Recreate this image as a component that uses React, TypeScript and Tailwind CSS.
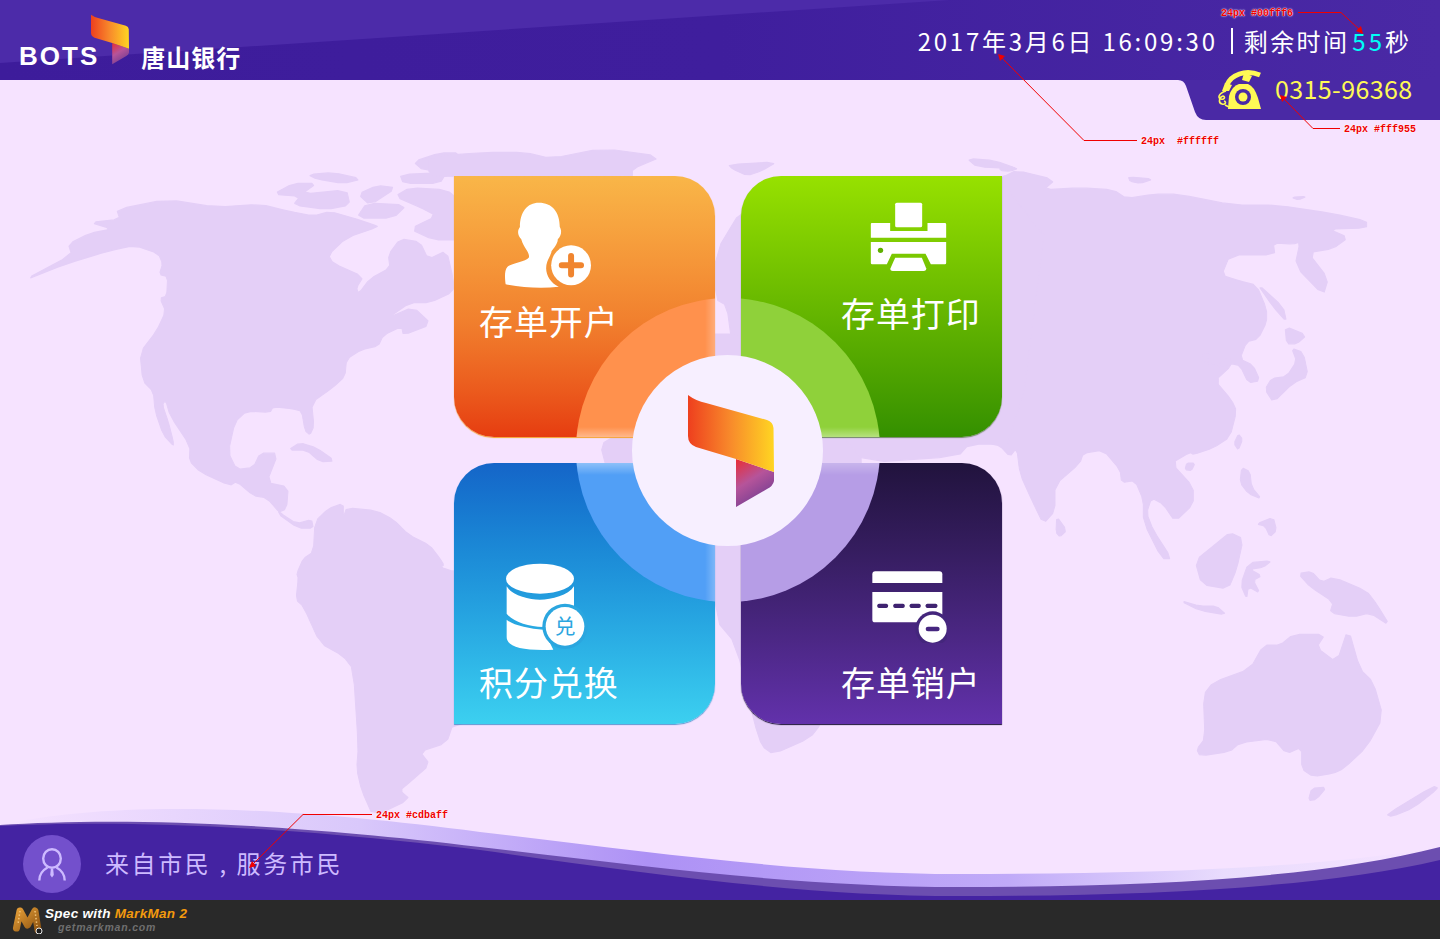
import React from 'react';

// map shapes are kept in the coordinates they were measured in, each group has its own transform
const AMERICAS = [
  'M65,326 L200,285 L330,255 L405,243 L475,262 L488,285 L478,310 L503,315 L500,360 L480,365 L497,395 L470,440 L420,490 L428,555 L460,580 L465,625 L490,680 L520,705 L520,695 L505,650 L487,610 L497,600 L510,635 L570,705 L568,740 L600,765 L690,797 L710,787 L760,820 L800,825 L840,860 L890,885 L935,875 L940,895 L895,895 L830,860 L860,850 L865,800 L800,790 L835,722 L780,722 L760,755 L710,760 L685,720 L705,650 L740,625 L810,628 L820,615 L880,620 L905,625 L915,670 L930,680 L942,660 L935,605 L1000,570 L1035,545 L1040,505 L1085,483 L1135,475 L1150,450 L1205,430 L1210,450 L1295,425 L1240,385 L1165,410 L1230,375 L1290,375 L1360,350 L1360,320 L1340,255 L1285,275 L1260,235 L1200,228 L1165,265 L1170,295 L1110,320 L1075,355 L1070,340 L1090,315 L1000,285 L985,265 L1040,225 L1135,200 L1120,195 L1060,180 L990,165 L940,175 L870,165 L780,148 L650,155 L500,137 L350,160 L360,183 L270,190 L335,205 L270,215 L205,240 L215,265 Z',
  'M820,125 L880,100 L950,100 L905,125 L1040,115 L1050,150 L980,160 L880,150 L900,130 Z',
  'M925,80 L1000,75 L1085,90 L1030,100 L950,90 Z',
  'M1075,125 L1130,105 L1190,110 L1110,150 Z',
  'M1185,130 L1230,110 L1340,115 L1380,140 L1380,230 L1300,230 L1230,205 L1310,175 L1260,155 Z',
  'M1100,145 L1220,150 L1180,180 L1070,180 Z',
  'M1200,80 L1340,75 L1320,100 L1210,100 Z',
  'M1240,50 L1320,30 L1380,30 L1380,70 L1270,70 Z',
  'M865,715 L900,698 L950,710 L1005,740 L960,742 L920,715 Z',
  'M945,880 L985,850 L1030,838 L1030,870 L1040,848 L1130,855 L1180,875 L1225,910 L1290,935 L1320,965 L1332,980 L1322,985 L1360,995 L1500,1000 L1500,1345 L1360,1345 L1340,1390 L1260,1410 L1290,1440 L1230,1480 L1200,1500 L1230,1520 L1120,1560 L1085,1500 L1070,1450 L1075,1400 L1060,1220 L1030,1190 L960,1160 L910,1075 L888,1060 L895,1010 L890,1000 L910,965 L940,950 Z',
];

const ASIA = [
  'M10,85 L50,70 L165,92 L130,115 L240,110 L340,115 L380,135 L460,125 L535,125 L700,150 L830,150 L1000,170 L1100,187 L1100,203 L985,205 L1045,225 L1000,250 L925,260 L985,320 L970,358 L885,290 L900,235 L880,240 L820,237 L825,265 L690,265 L665,312 L720,325 L770,335 L800,390 L800,420 L775,458 L740,465 L720,505 L760,520 L780,555 L745,560 L720,520 L690,515 L650,525 L595,505 L630,485 L620,515 L650,520 L690,500 L695,520 L645,555 L695,600 L710,625 L690,685 L640,710 L580,725 L570,720 L515,745 L580,800 L580,840 L525,880 L490,840 L455,825 L440,860 L460,900 L515,965 L485,965 L430,880 L430,830 L405,785 L365,790 L360,760 L310,715 L250,722 L240,745 L165,795 L165,855 L130,885 L95,830 L60,770 L50,710 L30,730 L0,705 L-30,700 L-30,85 Z',
  'M0,60 L55,65 L30,72 L0,70 Z',
  'M385,85 L460,90 L420,100 L390,95 Z',
  'M875,132 L920,130 L895,138 Z',
  'M770,330 L850,385 L860,420 L820,385 Z',
  'M855,430 L920,450 L890,470 L860,470 Z',
  'M875,480 L910,490 L925,545 L880,560 L820,605 L795,575 L815,550 L860,545 L890,510 Z',
  'M715,678 L728,690 L715,715 L702,700 Z',
  'M560,745 L585,745 L575,762 L555,760 Z',
  'M170,868 L200,900 L180,915 L168,905 Z',
  'M725,755 L750,765 L755,800 L785,828 L745,815 L720,790 Z',
  'M770,885 L820,870 L830,900 L810,915 L795,890 Z',
  'M690,905 L730,920 L710,990 L685,1035 L605,1025 L585,970 L650,930 Z',
  'M745,975 L815,970 L790,985 L750,990 L785,1005 L760,1015 L780,1045 L745,1030 L740,1058 L722,1025 Z',
  'M540,1062 L600,1075 L650,1075 L680,1095 L600,1085 Z',
  'M895,1000 L935,995 L965,1020 L1000,1008 L1100,1040 L1130,1070 L1170,1120 L1110,1090 L1060,1100 L990,1090 L1000,1065 L930,1030 Z',
  'M610,1280 L640,1250 L750,1220 L790,1165 L840,1165 L880,1140 L975,1140 L950,1170 L1010,1205 L1045,1125 L1080,1220 L1120,1250 L1150,1330 L1100,1400 L1030,1450 L1000,1460 L940,1468 L905,1450 L905,1400 L860,1415 L820,1380 L720,1390 L690,1410 L600,1420 L590,1405 L615,1380 Z',
  'M935,1495 L980,1492 L950,1520 L925,1523 Z',
  'M1160,1555 L1300,1490 L1315,1495 L1240,1540 L1175,1560 Z',
];

const CENTER = [
  'M-30,65 L120,55 L230,55 L300,70 L440,45 L600,65 L520,95 L520,115 L30,115 L-30,110 Z',
  'M780,85 L910,78 L870,100 L830,112 L790,95 Z',
  'M1425,70 L1500,75 L1560,95 L1450,90 Z',
  'M815,195 L745,300 L745,415 L775,430 L790,530 L1090,755 L1150,815 L1400,800 L1430,770 L1560,770 L1650,130 L1000,130 Z',
  'M435,790 L445,760 L520,745 L700,500 L820,500 L1090,755 L1150,815 L1100,1200 L1030,1455 L1000,1490 L900,1530 L870,1510 L850,1455 L800,1260 L745,1200 L745,1020 L520,1020 Z',
];

// one pass of corner cutting so the coast lines don't look like straight polygons
function smooth(d: string) {
  const nums = d.match(/-?\d+(\.\d+)?/g)!.map(Number);
  const pts: [number, number][] = [];
  for (let i = 0; i < nums.length; i += 2) pts.push([nums[i], nums[i + 1]]);
  const out: string[] = [];
  pts.forEach((p, i) => {
    const q = pts[(i + 1) % pts.length];
    out.push(`${p[0] * 0.8 + q[0] * 0.2},${p[1] * 0.8 + q[1] * 0.2}`);
    out.push(`${p[0] * 0.2 + q[0] * 0.8},${p[1] * 0.2 + q[1] * 0.8}`);
  });
  return `M${out.join(' L')} Z`;
}

function WorldMap() {
  return (
    <svg className="absolute inset-0" width="1440" height="939" viewBox="0 0 1440 939">
      <g fill="#e4cff7" stroke="#e4cff7" strokeWidth="3" strokeLinejoin="round">
        <g transform="translate(0 140) scale(0.3333 0.4337)">
          {AMERICAS.map((d, i) => <path key={i} d={smooth(d)} />)}
        </g>
        <g transform="translate(1000 140) scale(0.3333 0.4337)">
          {ASIA.map((d, i) => <path key={i} d={smooth(d)} />)}
        </g>
        <g transform="translate(440 130) scale(0.37 0.408)">
          {CENTER.map((d, i) => <path key={i} d={smooth(d)} />)}
        </g>
      </g>
    </svg>
  );
}

function Flag({ id, className }: { id: string; className: string }) {
  return (
    <svg className={className} viewBox="0 0 86 112">
      <defs>
        <linearGradient id={`${id}-front`} x1="0" y1="0" x2="1" y2="0">
          <stop offset="0" stopColor="#ee3f1e" />
          <stop offset="0.5" stopColor="#f88b2b" />
          <stop offset="1" stopColor="#ffd522" />
        </linearGradient>
        <linearGradient id={`${id}-back`} x1="0" y1="0" x2="0.5" y2="1">
          <stop offset="0" stopColor="#ea2c34" />
          <stop offset="0.5" stopColor="#b6549a" />
          <stop offset="1" stopColor="#743d92" />
        </linearGradient>
      </defs>
      <path d="M48,64 L86,77 L86,86 Q85,91 79,94 L48,112 Z" fill={`url(#${id}-back)`} />
      <path d="M0,0 Q8,6 18,8 L79,25 Q85,27 85.5,33 L86,77 L48,64 L8,52 Q0,49 0,41 Z" fill={`url(#${id}-front)`} />
    </svg>
  );
}

function PhoneIcon() {
  return (
    <svg className="w-[45px] h-[40px]" viewBox="0 0 45 40">
      <path d="M11,39 L12,26 Q15,16 22,14 L31,14 Q37,16 41,28 L44,39 Z" fill="#fff955" />
      <circle cx="26" cy="27" r="8" fill="#4a29a5" />
      <circle cx="26" cy="27" r="4.5" fill="#fff955" />
      <path d="M10,15 C14,5 28,-1 43,5" fill="none" stroke="#fff955" strokeWidth="5" />
      <path d="M27,3 L35,6 L32,12 L25,10 Z M8,13 L15,15 L12,21 L5,21 Z" fill="#fff955" />
      <path d="M9,21 C2,23 0,28 4,29 C7,30 9,27 6,26 C2,27 1,33 5,34 C8,35 10,32 7,31 M8,35 L12,37" fill="none" stroke="#fff955" strokeWidth="1.6" />
    </svg>
  );
}

function PersonAddIcon() {
  return (
    <svg className="w-[88px] h-[86px]" viewBox="160 95 265 258">
      <path
        d="M265,97 C230,97 208,125 208,170 C200,180 200,195 212,207 C220,235 238,245 235,262 C225,275 180,280 170,290 C160,300 163,330 165,342 C215,353 275,355 325,350 C295,335 280,305 290,275 C295,262 303,250 303,243 C318,225 322,215 322,207 C334,195 334,180 328,170 C328,125 305,97 265,97 Z"
        fill="#fff"
      />
      <circle cx="362" cy="285" r="60" fill="#fff" />
      <path d="M334,285 H392 M362,257 V313" stroke="#f0852f" strokeWidth="18" strokeLinecap="round" />
    </svg>
  );
}

function PrinterIcon() {
  return (
    <svg className="w-[77px] h-[70px]" viewBox="420 95 230 210">
      <rect x="495" y="97" width="81" height="74" rx="5" fill="#fff" />
      <path d="M425,158 H480 V182 H592 V158 H644 Q648,158 648,162 V202 H422 V161 Q422,158 425,158 Z" fill="#fff" />
      <path d="M422,215 H648 V278 Q648,282 644,282 H602 L586,250 H485 L470,282 H426 Q422,282 422,278 Z" fill="#fff" />
      <path d="M495,262 H575 L588,294 Q589,302 580,302 H488 Q479,302 481,294 Z" fill="#fff" />
      <circle cx="451" cy="240" r="8" fill="#5fb000" />
    </svg>
  );
}

function DatabaseIcon() {
  return (
    <svg className="w-[83px] h-[87px]" viewBox="168 338 249 261">
      <ellipse cx="270" cy="385" rx="102" ry="45" fill="#fff" />
      <path d="M170,408 C185,435 235,448 270,448 C305,448 355,435 372,408 V480 H300 L280,530 C235,528 190,515 170,490 Z" fill="#fff" />
      <path d="M170,508 C190,525 240,535 280,538 L310,598 C220,602 170,590 170,560 Z" fill="#fff" />
      <circle cx="345" cy="528" r="68" fill="#2ba6df" />
      <circle cx="345" cy="528" r="58" fill="#fff" />
      <text x="345" y="551" textAnchor="middle" fontSize="62" fill="#2ba6df" fontFamily="'Noto Sans CJK SC', sans-serif">兑</text>
    </svg>
  );
}

function CardIcon() {
  return (
    <svg className="w-[75px] h-[72px]" viewBox="424 362 225 216">
      <path d="M425,372 Q425,363 434,363 H626 Q635,363 635,372 V398 H425 Z" fill="#fff" />
      <path d="M425,425 H635 V516 H433 Q425,516 425,508 Z" fill="#fff" />
      <rect x="440" y="460" width="32" height="13" rx="5" fill="#3f2370" />
      <rect x="488" y="460" width="34" height="13" rx="5" fill="#3f2370" />
      <rect x="537" y="460" width="33" height="13" rx="5" fill="#3f2370" />
      <rect x="585" y="460" width="35" height="13" rx="5" fill="#3f2370" />
      <circle cx="606" cy="535" r="52" fill="#44267c" />
      <circle cx="606" cy="535" r="42" fill="#fff" />
      <rect x="585" y="529" width="42" height="14" rx="7" fill="#46267f" />
    </svg>
  );
}

function PersonOutline() {
  return (
    <svg className="w-[28px] h-[33px]" viewBox="0 0 28 33" fill="none" stroke="#cdbaff" strokeWidth="2.4">
      <ellipse cx="14" cy="10.5" rx="8.8" ry="9.3" />
      <path d="M1.3,32.5 C1.3,26 5,22 9.5,19.5 M26.7,32.5 C26.7,26 23,22 18.5,19.5" />
      <path d="M12.8,21 H15.2 L15.8,27 L14,29.5 L12.2,27 Z" fill="#cdbaff" stroke="none" />
    </svg>
  );
}

function MarkManLogo() {
  return (
    <svg className="w-[32px] h-[28px]" viewBox="0 0 32 28">
      <defs>
        <linearGradient id="mm" x1="0" y1="0" x2="1" y2="1">
          <stop offset="0" stopColor="#e09a35" />
          <stop offset="1" stopColor="#8f5512" />
        </linearGradient>
      </defs>
      <path d="M4.5,22 L8,5 L15.5,19 L23,5 L26,24" fill="none" stroke="url(#mm)" strokeWidth="7" strokeLinecap="round" strokeLinejoin="round" />
      <path d="M8,5 L6,18 M23,5 L25,20" stroke="#f3c377" strokeWidth="1.5" strokeDasharray="1.5 2" />
      <circle cx="27" cy="25" r="3" fill="#1d1d1d" stroke="#e8e8e8" strokeWidth="1" />
    </svg>
  );
}

function Annotation({ text, className }: { text: string; className: string }) {
  return (
    <span className={`absolute whitespace-pre font-['Liberation_Mono',monospace] text-[10px] leading-[12px] font-bold text-[#f00000] [text-shadow:0_0_1px_#fff,0_0_2px_#fff] ${className}`}>
      {text}
    </span>
  );
}

function AnnotationLines() {
  return (
    <svg className="absolute inset-0 pointer-events-none" width="1440" height="939" viewBox="0 0 1440 939" fill="none">
      <g stroke="#f00000" strokeWidth="1">
        <path d="M1298,12.5 H1341 L1361,31" />
        <path d="M1137,140.5 H1084 L1000,56" />
        <path d="M1340,128.5 H1313 L1282,97" />
        <path d="M372,814.5 H303 L252,865" />
      </g>
      <g fill="#f00000">
        <path d="M1363,34 L1356,31 L1361,26 Z" />
        <path d="M998,54 L1005,56 L1000,61 Z" />
        <path d="M1280,95 L1287,97 L1282,102 Z" />
        <path d="M249,868 L252,861 L256,866 Z" />
      </g>
    </svg>
  );
}

function Tile({ className, children }: { className: string; children: React.ReactNode }) {
  return (
    <div className={`relative w-[261px] h-[261px] overflow-hidden flex flex-col items-start ${className}`}>
      {children}
    </div>
  );
}

const tileLabel = 'relative text-[34px] leading-[34px] tracking-[0.9px] text-white';

export default function App() {
  return (
    <div className="relative w-[1440px] h-[939px] overflow-hidden flex flex-col bg-[#f6e3ff] font-['Noto_Sans_CJK_SC',sans-serif]">
      <WorldMap />

      <header className="relative h-20 flex items-start justify-between bg-gradient-to-r from-[#3d1c9b] via-[#3f1e9d] to-[#4a29a5]">
        <svg className="absolute inset-0" width="1440" height="80" viewBox="0 0 1440 80">
          <path d="M0,0 H950 L0,63 Z" fill="#4c2ba9" />
        </svg>
        <div className="relative flex items-end h-[70px] pl-[19px]">
          <span className="font-['Liberation_Sans',sans-serif] font-bold text-[26px] leading-[26px] tracking-[2px] text-white mb-[1px]">BOTS</span>
          <Flag id="small" className="absolute left-[91px] top-[14px] w-[38px] h-[51px]" />
          <span className="ml-[42px] text-[24px] leading-[26px] font-bold tracking-[1px] text-white">唐山银行</span>
        </div>
        <div className="relative flex items-center h-[81px] pr-[31px] text-[24px] text-white">
          <span className="tracking-[2.75px]">2017年3月6日 16:09:30</span>
          <span className="ml-[13px] mr-[11px] w-[2px] h-[26px] bg-white" />
          <span className="tracking-[2.4px]">剩余时间</span>
          <span className="tracking-[3px] text-[#00fff6] ml-[3px]">55</span>
          <span>秒</span>
        </div>
        <div className="absolute right-0 top-20 w-[262px] h-10">
          <svg className="absolute inset-0" width="262" height="40" viewBox="0 0 262 40">
            <path d="M0,0 Q6,0 8,6 L17,32 Q20,40 28,40 H262 V0 Z" fill="#4a29a5" />
          </svg>
        </div>
        <div className="absolute right-0 top-[70px] w-[262px] h-10 flex items-center">
          <div className="ml-[39px]"><PhoneIcon /></div>
          <span className="ml-[13px] mb-[4px] text-[25px] leading-[40px] tracking-[0.4px] text-[#fff955]">0315-96368</span>
        </div>
      </header>

      <main className="relative flex-1 pt-[96px] pl-[454px]">
        <div className="relative w-[548px] grid grid-cols-[261px_261px] gap-x-[26px] gap-y-[26px]">
          <Tile className="rounded-tr-[40px] rounded-bl-[40px] bg-gradient-to-b from-[#f9b648] via-[#f1802e] via-55% to-[#e63c10] pl-[25px] pt-[26px] shadow-[0_1px_1px_#f5a22e]">
            <div className="absolute left-[122px] top-[122px] w-[304px] h-[304px] rounded-full overflow-hidden bg-[#ff914d]">
              <div className="absolute left-0 top-[129px] w-full h-[10px] bg-gradient-to-b from-transparent to-white/35" />
              <div className="absolute top-0 left-[129px] h-full w-[10px] bg-gradient-to-r from-transparent to-white/25" />
            </div>
            <div className="relative ml-[25px]"><PersonAddIcon /></div>
            <span className={`${tileLabel} mt-[16px]`}>存单开户</span>
          </Tile>
          <Tile className="rounded-tl-[40px] rounded-br-[40px] bg-gradient-to-b from-[#97e100] to-[#349000] pl-[100px] pt-[26px] shadow-[0_1px_1px_rgba(40,90,10,0.6)]">
            <div className="absolute left-[-165px] top-[122px] w-[304px] h-[304px] rounded-full overflow-hidden bg-[#8fd13a]">
              <div className="absolute left-0 top-[129px] w-full h-[10px] bg-gradient-to-b from-transparent to-white/35" />
            </div>
            <div className="relative ml-[29px]"><PrinterIcon /></div>
            <span className={`${tileLabel} mt-[24px]`}>存单打印</span>
          </Tile>
          <Tile className="rounded-tl-[40px] rounded-br-[40px] bg-gradient-to-b from-[#1565c8] to-[#3cd0f0] pl-[25px] pt-[100px] shadow-[0_1px_1px_rgba(30,120,190,0.7)]">
            <div className="absolute left-[122px] top-[-165px] w-[304px] h-[304px] rounded-full overflow-hidden bg-[#519ff6]">
              <div className="absolute left-0 top-[165px] w-full h-[12px] bg-gradient-to-t from-transparent to-white/35" />
              <div className="absolute top-0 left-[129px] h-full w-[10px] bg-gradient-to-r from-transparent to-white/25" />
            </div>
            <div className="relative ml-[27px]"><DatabaseIcon /></div>
            <span className={`${tileLabel} mt-[15px]`}>积分兑换</span>
          </Tile>
          <Tile className="rounded-tr-[40px] rounded-bl-[40px] bg-gradient-to-b from-[#21133d] to-[#6231ab] pl-[100px] pt-[108px] shadow-[0_1px_1px_#1d1238]">
            <div className="absolute left-[-165px] top-[-165px] w-[304px] h-[304px] rounded-full overflow-hidden bg-[#b69de6]">
              <div className="absolute left-0 top-[165px] w-full h-[12px] bg-gradient-to-t from-transparent to-white/25" />
            </div>
            <div className="relative ml-[31px]"><CardIcon /></div>
            <span className={`${tileLabel} mt-[22px]`}>存单销户</span>
          </Tile>

          <div className="absolute left-[178px] top-[179px] w-[191px] h-[191px] rounded-full bg-[#f7efff] flex items-center justify-center">
            <Flag id="big" className="w-[86px] h-[112px] ml-[6px]" />
          </div>
        </div>
      </main>

      <section className="relative h-[75px] flex items-center pl-[23px] pt-[3px]">
        <svg className="absolute left-0 bottom-0" width="1440" height="100" viewBox="0 0 1440 100">
          <defs>
            <linearGradient id="swoosh" x1="0" y1="0" x2="1" y2="0">
              <stop offset="0" stopColor="#f6e3ff" />
              <stop offset="0.25" stopColor="#d9c8fb" />
              <stop offset="0.45" stopColor="#ad91f5" />
              <stop offset="0.7" stopColor="#c0aaf8" />
              <stop offset="0.85" stopColor="#e9dcfd" />
              <stop offset="1" stopColor="#f6e3ff" />
            </linearGradient>
          </defs>
          <path d="M0,25 C100,3 250,2 480,32 C650,52 800,74 960,74 C1150,74 1320,68 1440,47 V100 H0 Z" fill="url(#swoosh)" />
          <path d="M0,25 C100,19 250,19 480,47 C650,67 800,87 960,87 C1150,87 1320,78 1440,47 V100 H0 Z" fill="#6c4eb0" />
          <path d="M0,26 C100,21 250,22 480,50 C650,74 800,96 960,96 C1150,96 1320,88 1440,60 V100 H0 Z" fill="#4423a2" />
        </svg>
        <div className="relative w-[58px] h-[58px] rounded-full bg-[#7350cc] flex items-center justify-center">
          <PersonOutline />
        </div>
        <span className="relative ml-[24px] mb-[3px] text-[24px] tracking-[2.6px] text-[#cdbaff] whitespace-pre">来自市民 , 服务市民</span>
      </section>

      <footer className="relative h-[39px] bg-[#292929] flex items-center pl-[12px] font-['Liberation_Sans',sans-serif] italic font-bold">
        <MarkManLogo />
        <div className="ml-[1px] flex flex-col">
          <div className="flex gap-[4px] text-[13.5px] leading-[14px] tracking-[0.3px]">
            <span className="text-white">Spec with</span>
            <span className="text-[#f39a0e]">MarkMan 2</span>
          </div>
          <span className="ml-[13px] text-[10.5px] leading-[12px] tracking-[0.8px] text-[#6f6f6f]">getmarkman.com</span>
        </div>
      </footer>

      <AnnotationLines />
      <Annotation text="24px #00fff6" className="left-[1221px] top-[8px]" />
      <Annotation text="24px  #ffffff" className="left-[1141px] top-[136px]" />
      <Annotation text="24px #fff955" className="left-[1344px] top-[124px]" />
      <Annotation text="24px #cdbaff" className="left-[376px] top-[810px]" />
    </div>
  );
}
